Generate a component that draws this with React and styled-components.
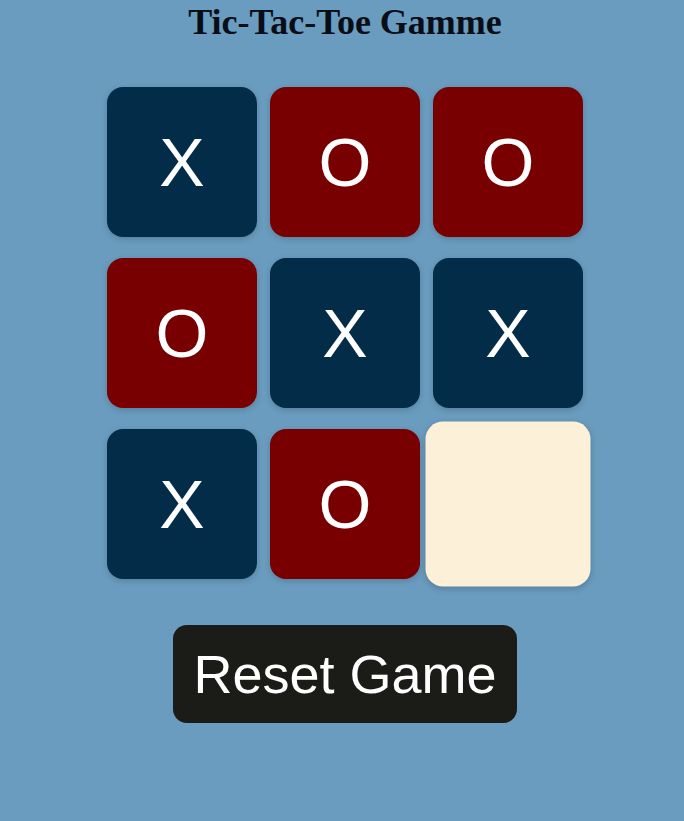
import React from "react";
import styled, { createGlobalStyle } from "styled-components";

const Global = createGlobalStyle`
  html, body {
    margin: 0;
    padding: 0;
    background: #6a9cbf;
  }
  body {
    font-family: "Liberation Sans", Arial, sans-serif;
  }
`;

const Page = styled.main`
  display: flex;
  flex-direction: column;
  align-items: center;
  padding-left: 6px;
  min-height: 821px;
  box-sizing: border-box;
`;

const Title = styled.h1`
  margin: 2px 0 45px;
  font-family: "Liberation Serif", "Times New Roman", serif;
  font-weight: bold;
  font-size: 36px;
  line-height: 40px;
  color: #090d16;
`;

const Board = styled.div`
  display: grid;
  grid-template-columns: repeat(3, 150px);
  grid-auto-rows: 150px;
  column-gap: 13px;
  row-gap: 21px;
`;

const colors = {
  X: "#032c49",
  O: "#780000",
  "": "#fdf0d8",
};

const Cell = styled.button`
  border: none;
  padding: 0;
  width: 150px;
  height: 150px;
  border-radius: 16px;
  background: ${(p) => colors[p.$mark]};
  color: #ffffff;
  font-family: "Liberation Sans", Arial, sans-serif;
  font-size: 68px;
  line-height: 1;
  display: flex;
  align-items: center;
  justify-content: center;
  box-shadow: 0 2px 6px rgba(0, 0, 0, 0.18);
  transform: ${(p) => (p.$active ? "scale(1.1)" : "none")};
  cursor: pointer;
`;

const Reset = styled.button`
  margin-top: 46px;
  width: 344px;
  height: 98px;
  border: none;
  border-radius: 14px;
  background: #1b1b18;
  color: #ffffff;
  font-family: "Liberation Sans", Arial, sans-serif;
  font-size: 54px;
  line-height: 1;
  display: flex;
  align-items: center;
  justify-content: center;
  cursor: pointer;
`;

const board = ["X", "O", "O", "O", "X", "X", "X", "O", ""];

export default function App() {
  return (
    <>
      <Global />
      <Page>
        <Title>Tic-Tac-Toe Gamme</Title>
        <Board>
          {board.map((m, i) => (
            <Cell key={i} $mark={m} $active={m === ""}>
              {m}
            </Cell>
          ))}
        </Board>
        <Reset>Reset Game</Reset>
      </Page>
    </>
  );
}
